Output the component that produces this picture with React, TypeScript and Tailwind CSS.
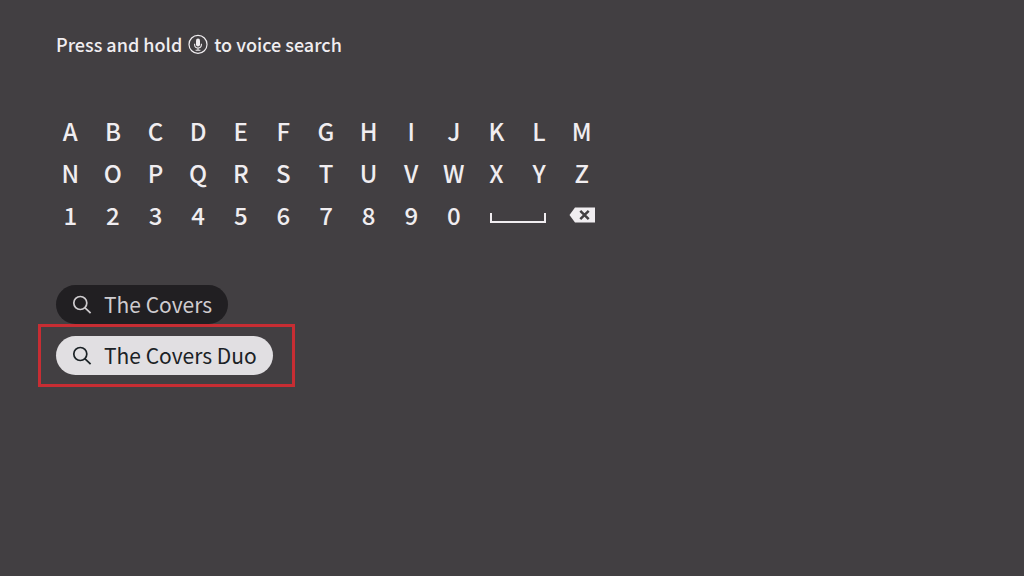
import React from "react";

const letterRows = ["ABCDEFGHIJKLM", "NOPQRSTUVWXYZ"];
const digits = "1234567890";

function MicIcon() {
  return (
    <svg className="size-5" viewBox="0 0 20 20" fill="none" stroke="currentColor" aria-hidden="true">
      <circle cx="10" cy="10.4" r="9" strokeWidth="1.2" />
      <rect x="8" y="4.5" width="4" height="8" rx="2" fill="currentColor" stroke="none" />
      <path d="M6.6 9.7v.9a3.4 3.4 0 0 0 6.8 0v-.9M10 14v2.2M7.6 16.2h4.8" strokeWidth="1.1" />
    </svg>
  );
}

function SearchIcon() {
  return (
    <svg className="size-5" viewBox="0 0 20 20" fill="none" stroke="currentColor" strokeWidth="1.7" aria-hidden="true">
      <circle cx="8.3" cy="8" r="6.5" />
      <path d="M12.8 12.6l5.8 5.6" />
    </svg>
  );
}

function SpaceIcon() {
  return (
    <svg className="w-14 h-4" viewBox="0 0 56 16" fill="none" stroke="currentColor" strokeWidth="2" aria-hidden="true">
      <path d="M1 6v9h54V6" />
    </svg>
  );
}

function BackspaceIcon() {
  return (
    <svg className="w-[26px] h-4" viewBox="0 0 26 16" aria-hidden="true">
      <path d="M6 0.5h20v15H6L0.5 8z" fill="currentColor" />
      <path d="M11.3 3.8l8.4 8.4M19.7 3.8l-8.4 8.4" stroke="#423f42" strokeWidth="2.5" />
    </svg>
  );
}

function Key({ label }: { label: string }) {
  return (
    <button type="button" className="flex items-center justify-center text-2xl font-medium">
      {label}
    </button>
  );
}

export default function App() {
  return (
    <main className="min-h-screen bg-[#423f42] px-12 pt-8 text-[#f0edf0] font-['Noto_Sans_CJK_SC','Noto_Sans',sans-serif]">
      <h1 className="flex items-center gap-1.5 px-2 text-lg leading-6 font-medium">
        Press and hold
        <MicIcon />
        to voice search
      </h1>

      <div className="mt-[54px] grid w-full max-w-[556px] grid-cols-13 auto-rows-[42px] px-px">
        {letterRows.map((row) => row.split("").map((char) => <Key key={char} label={char} />))}
        {digits.split("").map((char) => (
          <Key key={char} label={char} />
        ))}
        <button type="button" aria-label="Space" className="col-span-2 flex items-center justify-center">
          <SpaceIcon />
        </button>
        <button type="button" aria-label="Backspace" className="flex items-center justify-center">
          <BackspaceIcon />
        </button>
      </div>

      <ul className="mt-[49px] flex flex-col items-start gap-3 px-2 text-[21px]">
        <li>
          <button type="button" className="flex h-[39px] items-center gap-3 rounded-full bg-[#211f22] px-4 text-[#cfcccf]">
            <SearchIcon />
            The Covers
          </button>
        </li>
        <li className="relative">
          <button type="button" className="flex h-[39px] items-center gap-3 rounded-full bg-[#e1dfe2] px-4 text-[#1b2226]">
            <SearchIcon />
            The Covers Duo
          </button>
          <span className="pointer-events-none absolute -inset-y-3 -left-[18px] -right-[22px] border-3 border-[#c72d33]" />
        </li>
      </ul>
    </main>
  );
}
